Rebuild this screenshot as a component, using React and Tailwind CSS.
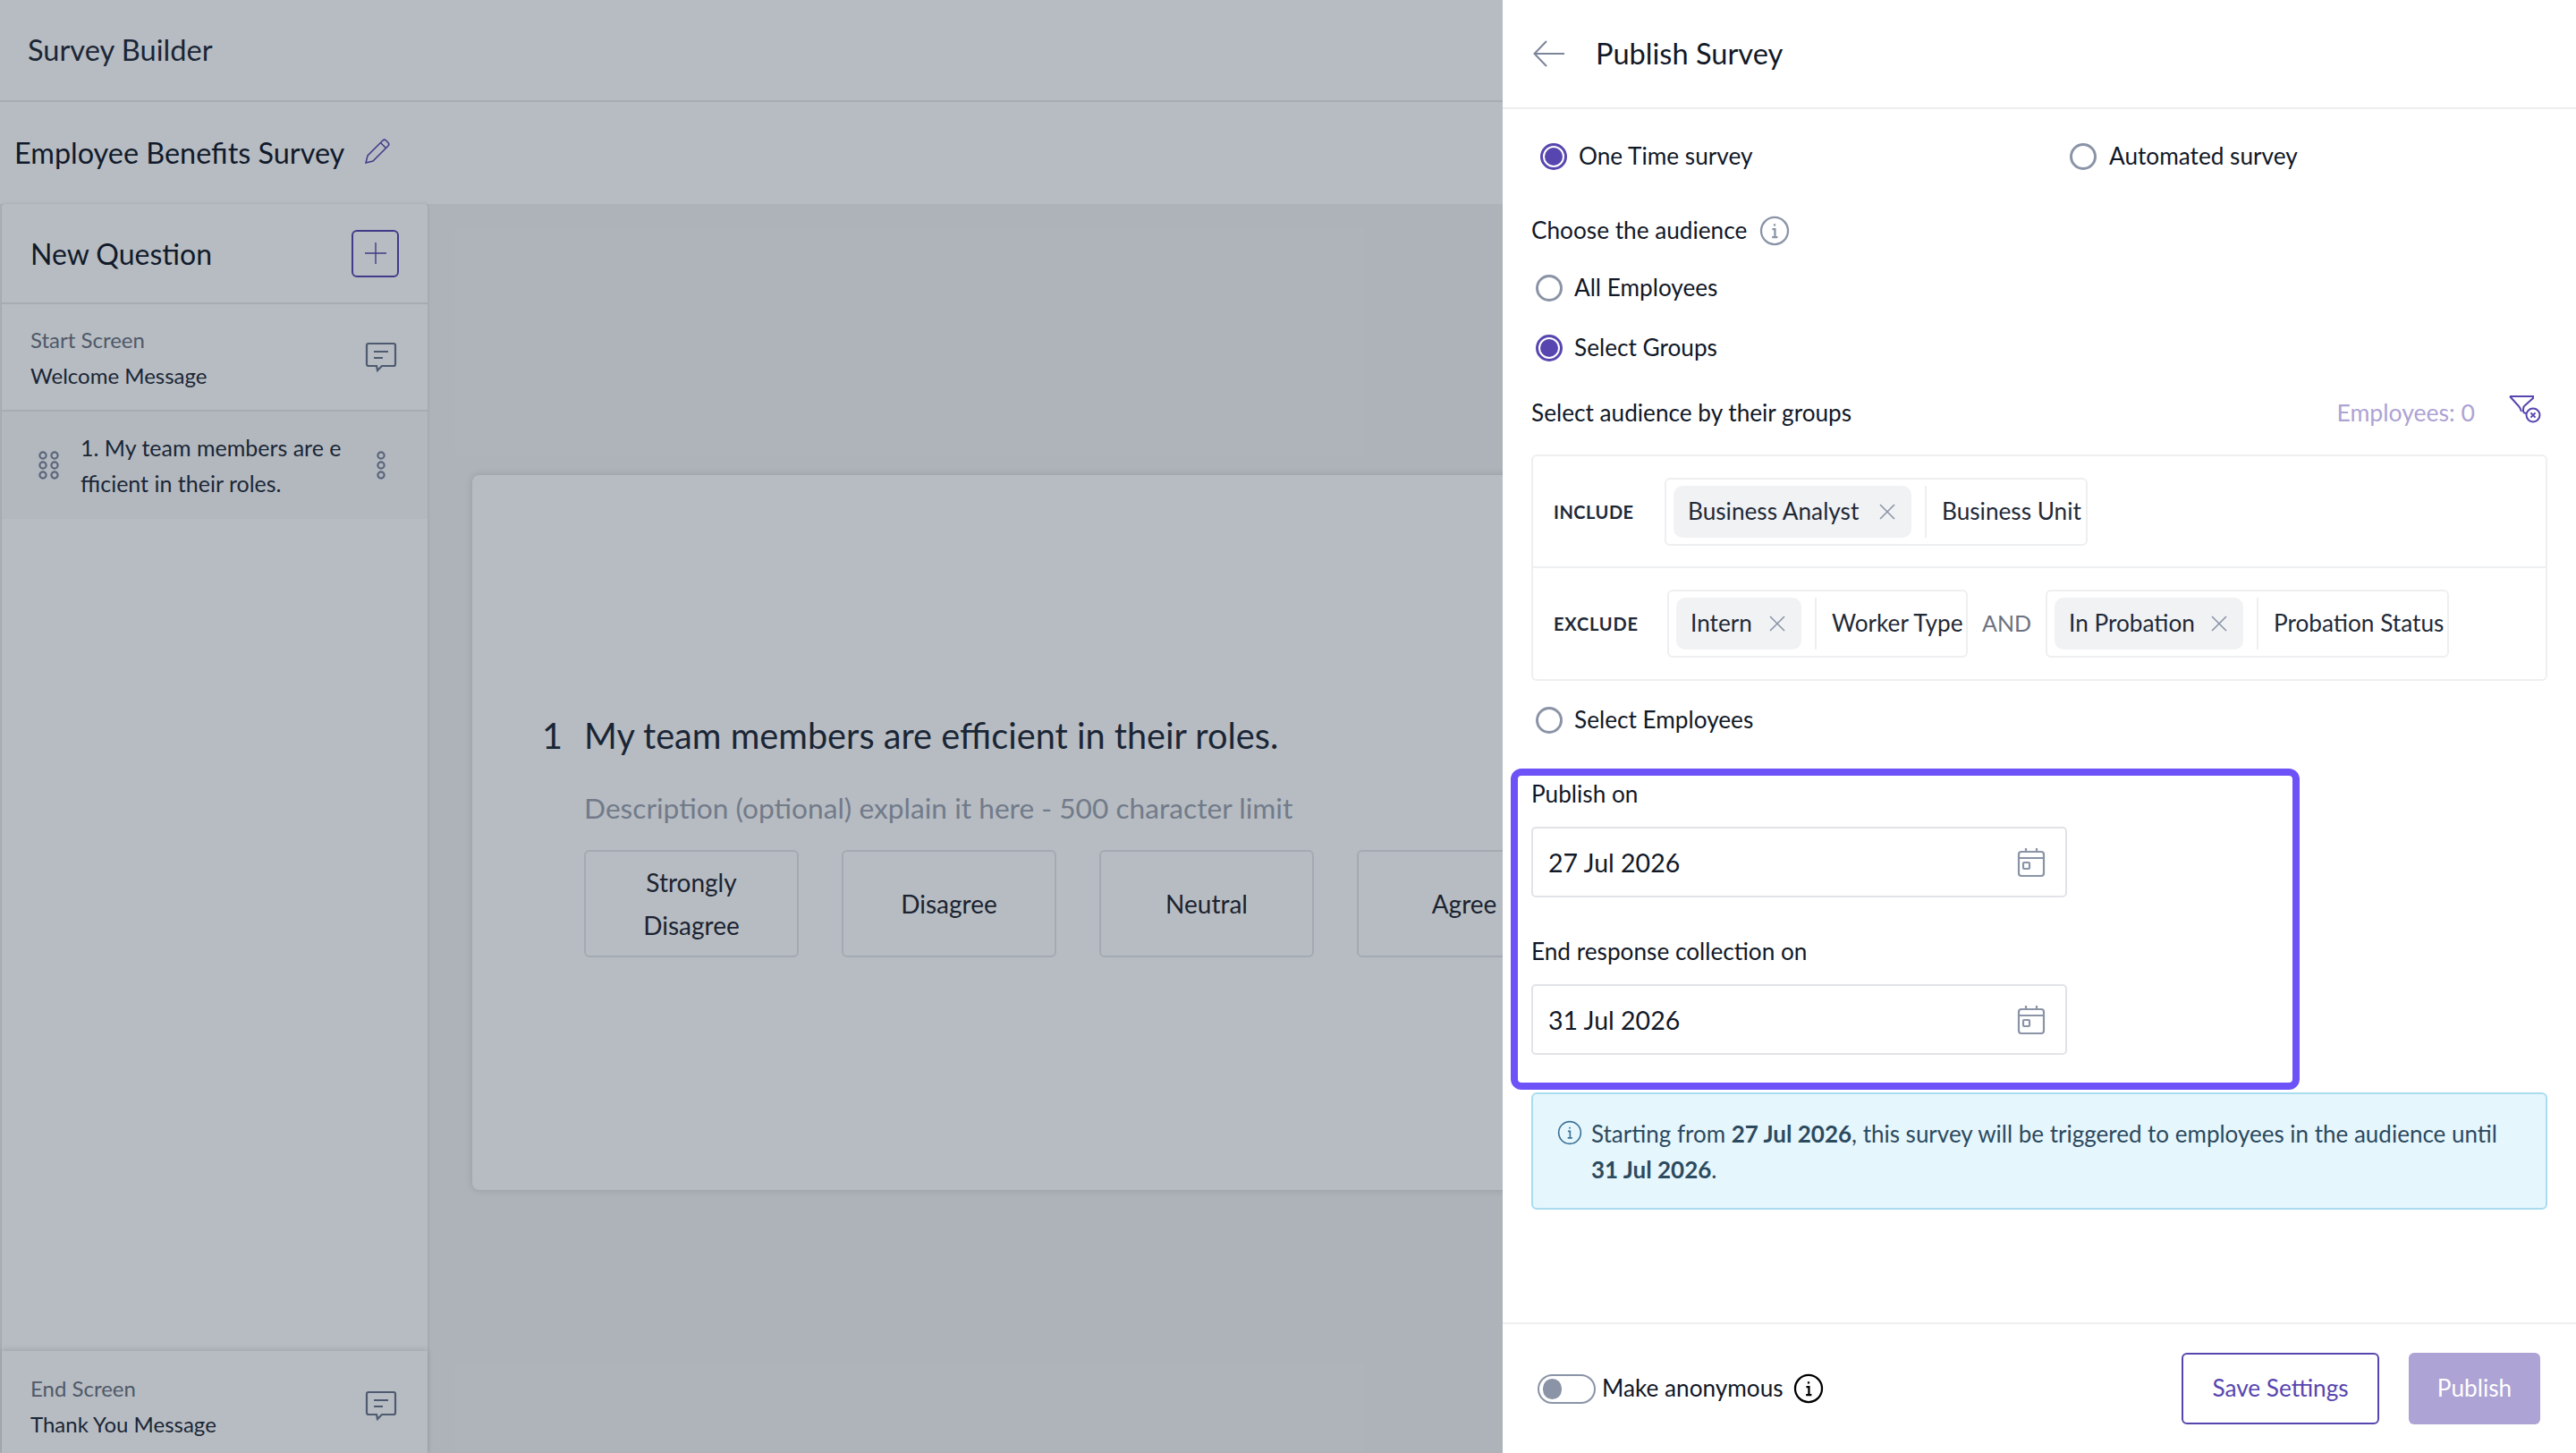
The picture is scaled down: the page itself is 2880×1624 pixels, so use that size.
const font = { fontFamily: '"Lato", "Open Sans", sans-serif' };

const Radio = ({ checked }) => (
    <span className={`w-[30px] h-[30px] rounded-full border-[3px] bg-white flex items-center justify-center shrink-0 ${checked ? "border-[#5746af]" : "border-[#8a94a6]"}`}>
        {checked ? <span className="w-[20px] h-[20px] rounded-full bg-[#5746af]"></span> : null}
    </span>
);

const InfoIcon = ({ size = 34, color = "#8a94a6", width = 1.6 }) => (
    <svg width={size} height={size} viewBox="0 0 24 24" fill="none" stroke={color} strokeWidth={width} className="shrink-0">
        <circle cx="12" cy="12" r="10.6" />
        <path d="M12 6.6v1.6M10.2 10.6H12.3V17M10 17h4.4" />
    </svg>
);

const ChatIcon = () => (
    <svg width="36" height="34" viewBox="0 0 36 34" fill="none" stroke="#68738a" strokeWidth="2.2" className="shrink-0">
        <path d="M4 2h28a2 2 0 0 1 2 2v21a2 2 0 0 1-2 2H19l-5 5-1-5H4a2 2 0 0 1-2-2V4a2 2 0 0 1 2-2z" />
        <path d="M10 11h16M10 18h10" />
    </svg>
);

const CalendarIcon = () => (
    <svg width="32" height="34" viewBox="0 0 32 34" fill="none" stroke="#8a94a6" strokeWidth="2.2" className="shrink-0">
        <rect x="2" y="5" width="28" height="27" rx="3" />
        <path d="M2 12h28M10 1v5M22 1v5" />
        <rect x="7" y="17" width="7" height="7" rx="1" />
    </svg>
);

const CloseIcon = () => (
    <svg width="18" height="18" viewBox="0 0 18 18" fill="none" stroke="#8a94a6" strokeWidth="1.6" className="shrink-0">
        <path d="M1 1l16 16M17 1L1 17" />
    </svg>
);

const Dots = ({ cols }) => (
    <svg width={cols * 14 + 2} height="32" viewBox={`0 0 ${cols * 14 + 2} 32`} fill="none" stroke="#7c859a" strokeWidth="2.2" className="shrink-0">
        {[5, 16, 27].map(y => (
            <g key={y}>
                <circle cx="8" cy={y} r="3.6" />
                {cols > 1 ? <circle cx="21" cy={y} r="3.6" /> : null}
            </g>
        ))}
    </svg>
);

const ChipGroup = ({ chip, type, groupWidth, chipWidth }) => (
    <div className={`h-[76px] px-[8px] border-2 border-[#eeeff1] rounded-[6px] flex items-center gap-[15px] shrink-0 ${groupWidth}`}>
        <span className={`h-[58px] pl-[16px] pr-[18px] rounded-[10px] bg-[#f1f2f4] flex items-center justify-between text-[#1f2937] shrink-0 ${chipWidth}`}>
            {chip}
            <CloseIcon />
        </span>
        <span className="w-[2px] h-[58px] bg-[#eeeff1] shrink-0"></span>
        <span className="text-[#1f2937] pl-[2px] whitespace-nowrap">{type}</span>
    </div>
);

const DateField = ({ value }) => (
    <div className="mt-[15px] w-[599px] h-[79px] border-2 border-[#e2e3e8] rounded-[5px] pl-[17px] pr-[22px] flex items-center justify-between text-[28.5px] text-[#111827]">
        <span className="pt-[2px]">{value}</span>
        <CalendarIcon />
    </div>
);

const OptionBox = ({ children }) => (
    <div className="w-[240px] h-[120px] shrink-0 border-2 border-[#e3e5ea] rounded-[6px] flex items-center justify-center text-center text-[28px] leading-[48px] text-[#1f2530]">
        {children}
    </div>
);

const SurveyBuilder = () => {
    return (
        <div className="relative w-[1680px] h-[1624px] shrink-0 overflow-hidden bg-[#f2f2f2] flex flex-col">
            <div className="h-[114px] shrink-0 bg-white border-b-2 border-[#e8e8e8] flex items-center pl-[31px] text-[32.6px] text-[#1f2937]">Survey Builder</div>
            <div className="h-[114px] shrink-0 bg-white flex items-center pl-[16px] gap-[22px] text-[32.4px] text-[#111827]">
                Employee Benefits Survey
                <svg width="30" height="30" viewBox="0 0 30 30" fill="none" stroke="#5746af" strokeWidth="1.5" className="-mt-[4px]">
                    <path d="M2 28l2-8L21 3a2.5 2.5 0 0 1 3.5 0l2.5 2.5a2.5 2.5 0 0 1 0 3.5L10 26z" />
                    <path d="M18.5 5.5l6 6" />
                </svg>
            </div>

            <div className="flex-1 flex min-h-0">
                <div className="w-[476px] ml-[2px] shrink-0 bg-white flex flex-col rounded-t-[4px] shadow-[0_0_4px_rgba(0,0,0,0.12)]">
                    <div className="h-[112px] shrink-0 border-b-2 border-[#e8e8e8] flex items-center justify-between pl-[32px] pr-[32px]">
                        <span className="text-[32px] text-[#111827] pt-[2px]">New Question</span>
                        <span className="w-[53px] h-[53px] rounded-[6px] border-2 border-[#5746af] flex items-center justify-center">
                            <svg width="24" height="24" viewBox="0 0 24 24" fill="none" stroke="#5746af" strokeWidth="1.4">
                                <path d="M12 0v24M0 12h24" />
                            </svg>
                        </span>
                    </div>
                    <div className="h-[120px] shrink-0 border-b-2 border-[#e8e8e8] flex items-center justify-between pl-[32px] pr-[34px]">
                        <div className="flex flex-col gap-[11px] text-[24px] leading-[29px]">
                            <span className="text-[#6b7280]">Start Screen</span>
                            <span className="text-[#1f2937]">Welcome Message</span>
                        </div>
                        <ChatIcon />
                    </div>
                    <div className="h-[120px] shrink-0 bg-[#f9fafb] flex items-center pl-[38px] pr-[44px]">
                        <Dots cols={2} />
                        <p className="ml-[20px] text-[25px] leading-[40px] text-[#1f2937] whitespace-nowrap">
                            <span>1. My team members are e</span><br /><span>fficient in their roles.</span>
                        </p>
                        <span className="ml-auto"><Dots cols={1} /></span>
                    </div>
                    <div className="mt-auto h-[114px] shrink-0 pt-[8px] shadow-[0_-2px_6px_rgba(0,0,0,0.12)] flex items-center justify-between pl-[32px] pr-[34px]">
                        <div className="flex flex-col gap-[11px] text-[24px] leading-[29px]">
                            <span className="text-[#6b7280]">End Screen</span>
                            <span className="text-[#1f2937]">Thank You Message</span>
                        </div>
                        <ChatIcon />
                    </div>
                </div>

                <div className="flex-1 pl-[50px] pt-[303px]">
                    <div className="w-[1500px] h-[799px] bg-white rounded-[8px] shadow-[0_0_8px_rgba(0,0,0,0.14)] flex flex-col pt-[263px] pl-[78px]">
                        <div className="flex items-center text-[39.7px] leading-[56px] text-[#1f2937]">
                            <span className="w-[47px]">1</span>
                            <span>My team members are efficient in their roles.</span>
                        </div>
                        <p className="mt-[31px] ml-[47px] text-[31.7px] leading-[44px] text-[#9ca3af]">Description (optional) explain it here - 500 character limit</p>
                        <div className="mt-[25px] ml-[47px] flex gap-[48px]">
                            <OptionBox>Strongly<br />Disagree</OptionBox>
                            <OptionBox>Disagree</OptionBox>
                            <OptionBox>Neutral</OptionBox>
                            <OptionBox>Agree</OptionBox>
                        </div>
                    </div>
                </div>
            </div>

            {/* modal backdrop */}
            <div className="absolute inset-0 bg-[#0f2236]/30"></div>
        </div>
    );
};

const PublishPanel = () => {
    return (
        <div className="w-[1200px] h-[1624px] shrink-0 bg-white flex flex-col">
            <div className="h-[122px] shrink-0 border-b-2 border-[#eeeeee] flex items-center pl-[34px] gap-[34px]">
                <svg width="36" height="30" viewBox="0 0 36 30" fill="none" stroke="#7c859a" strokeWidth="2">
                    <path d="M35 15H2M15 1L1.5 15 15 29" />
                </svg>
                <span className="text-[32.6px] text-[#111827]">Publish Survey</span>
            </div>

            <div className="px-[32px] flex flex-col text-[26.2px] text-[#111827]">
                <div className="mt-[33px] h-[40px] pl-[10px] flex items-center">
                    <div className="w-[592px] flex items-center gap-[13px]"><Radio checked />One Time survey</div>
                    <div className="flex items-center gap-[14px]"><Radio />Automated survey</div>
                </div>

                <div className="mt-[43px] h-[40px] flex items-center gap-[14px]">Choose the audience <InfoIcon /></div>
                <div className="mt-[24px] h-[40px] pl-[5px] flex items-center gap-[13px]"><Radio />All Employees</div>
                <div className="mt-[27px] h-[40px] pl-[5px] flex items-center gap-[13px]"><Radio checked />Select Groups</div>

                <div className="mt-[33px] h-[40px] flex items-center justify-between">
                    <span>Select audience by their groups</span>
                    <div className="flex items-center gap-[38px] pr-[7px]">
                        <span className="text-[#ada3d4] text-[26.6px]">Employees: 0</span>
                        <svg width="36" height="32" viewBox="0 0 36 32" fill="none" stroke="#5746af" strokeWidth="2" className="-mt-[10px]">
                            <path d="M1 2h26v2l-10 9c-1 1-1 3-1 5 0 2 2 3 4 3M1 2l10 11c1 1 2 3 3 6" />
                            <circle cx="27" cy="23" r="7.5" />
                            <path d="M24.4 20.4l5.2 5.2M29.6 20.4l-5.2 5.2" />
                        </svg>
                    </div>
                </div>

                <div className="mt-[26px] h-[253px] border-2 border-[#eeeff1] rounded-[6px] flex flex-col">
                    <div className="h-[125px] border-b-2 border-[#eeeff1] flex items-center pl-[23px]">
                        <span className="w-[124px] text-[20px] font-bold tracking-[0.5px] text-[#1f2937]">INCLUDE</span>
                        <ChipGroup chip="Business Analyst" type="Business Unit" groupWidth="w-[473px]" chipWidth="w-[266px]" />
                    </div>
                    <div className="flex-1 flex items-center pl-[23px]">
                        <span className="w-[127px] text-[20px] font-bold tracking-[0.8px] text-[#1f2937]">EXCLUDE</span>
                        <ChipGroup chip="Intern" type="Worker Type" groupWidth="w-[336px]" chipWidth="w-[140px]" />
                        <span className="mx-[16px] text-[25px] text-[#6b7280]">AND</span>
                        <ChipGroup chip="In Probation" type="Probation Status" groupWidth="w-[451px]" chipWidth="w-[211px]" />
                    </div>
                </div>

                <div className="mt-[24px] h-[40px] pl-[5px] flex items-center gap-[13px]"><Radio />Select Employees</div>

                <div className="mt-[34px] -ml-[23px] w-[882px] h-[359px] border-[8px] border-[#6d53f7] rounded-[12px] pl-[15px]">
                    <div className="h-[42px] flex items-center">Publish on</div>
                    <DateField value="27 Jul 2026" />
                    <div className="mt-[40px] h-[42px] flex items-center">End response collection on</div>
                    <DateField value="31 Jul 2026" />
                </div>

                <div className="mt-[3px] h-[131px] border-2 border-[#aadcf0] rounded-[6px] bg-[#e6f6fd] flex pl-[27px] pt-[24px] text-[26px] text-[#2c4a5e]">
                    <span className="pt-[5px]"><InfoIcon size={28} color="#3b7197" width={1.4} /></span>
                    <p className="ml-[10px] leading-[40px] whitespace-nowrap">
                        <span>Starting from </span><b className="font-bold">27 Jul 2026</b><span>, this survey will be triggered to employees in the audience until</span>
                        <br />
                        <b className="font-bold">31 Jul 2026</b><span>.</span>
                    </p>
                </div>
            </div>

            <div className="mt-auto h-[146px] shrink-0 border-t-2 border-[#eeeeee] flex items-center pl-[39px] pr-[40px] text-[26.2px] text-[#111827]">
                <span className="w-[65px] h-[33px] rounded-full border-2 border-[#8a94a6] flex items-center pl-[4px]">
                    <span className="w-[21px] h-[23px] rounded-full bg-[#8a94a6]"></span>
                </span>
                <span className="ml-[7px]">Make anonymous</span>
                <span className="ml-[11px]"><InfoIcon size={34} color="#000000" /></span>
                <button className="ml-auto w-[221px] h-[80px] rounded-[6px] border-2 border-[#5746af] text-[#5746af]">Save Settings</button>
                <button className="ml-[33px] w-[147px] h-[80px] rounded-[6px] bg-[#ada3d4] text-white">Publish</button>
            </div>
        </div>
    );
};

const App = () => {
    return (
        <div style={font} className="w-[2880px] h-[1624px] flex overflow-hidden">
            <SurveyBuilder />
            <PublishPanel />
        </div>
    );
};

export default App;
